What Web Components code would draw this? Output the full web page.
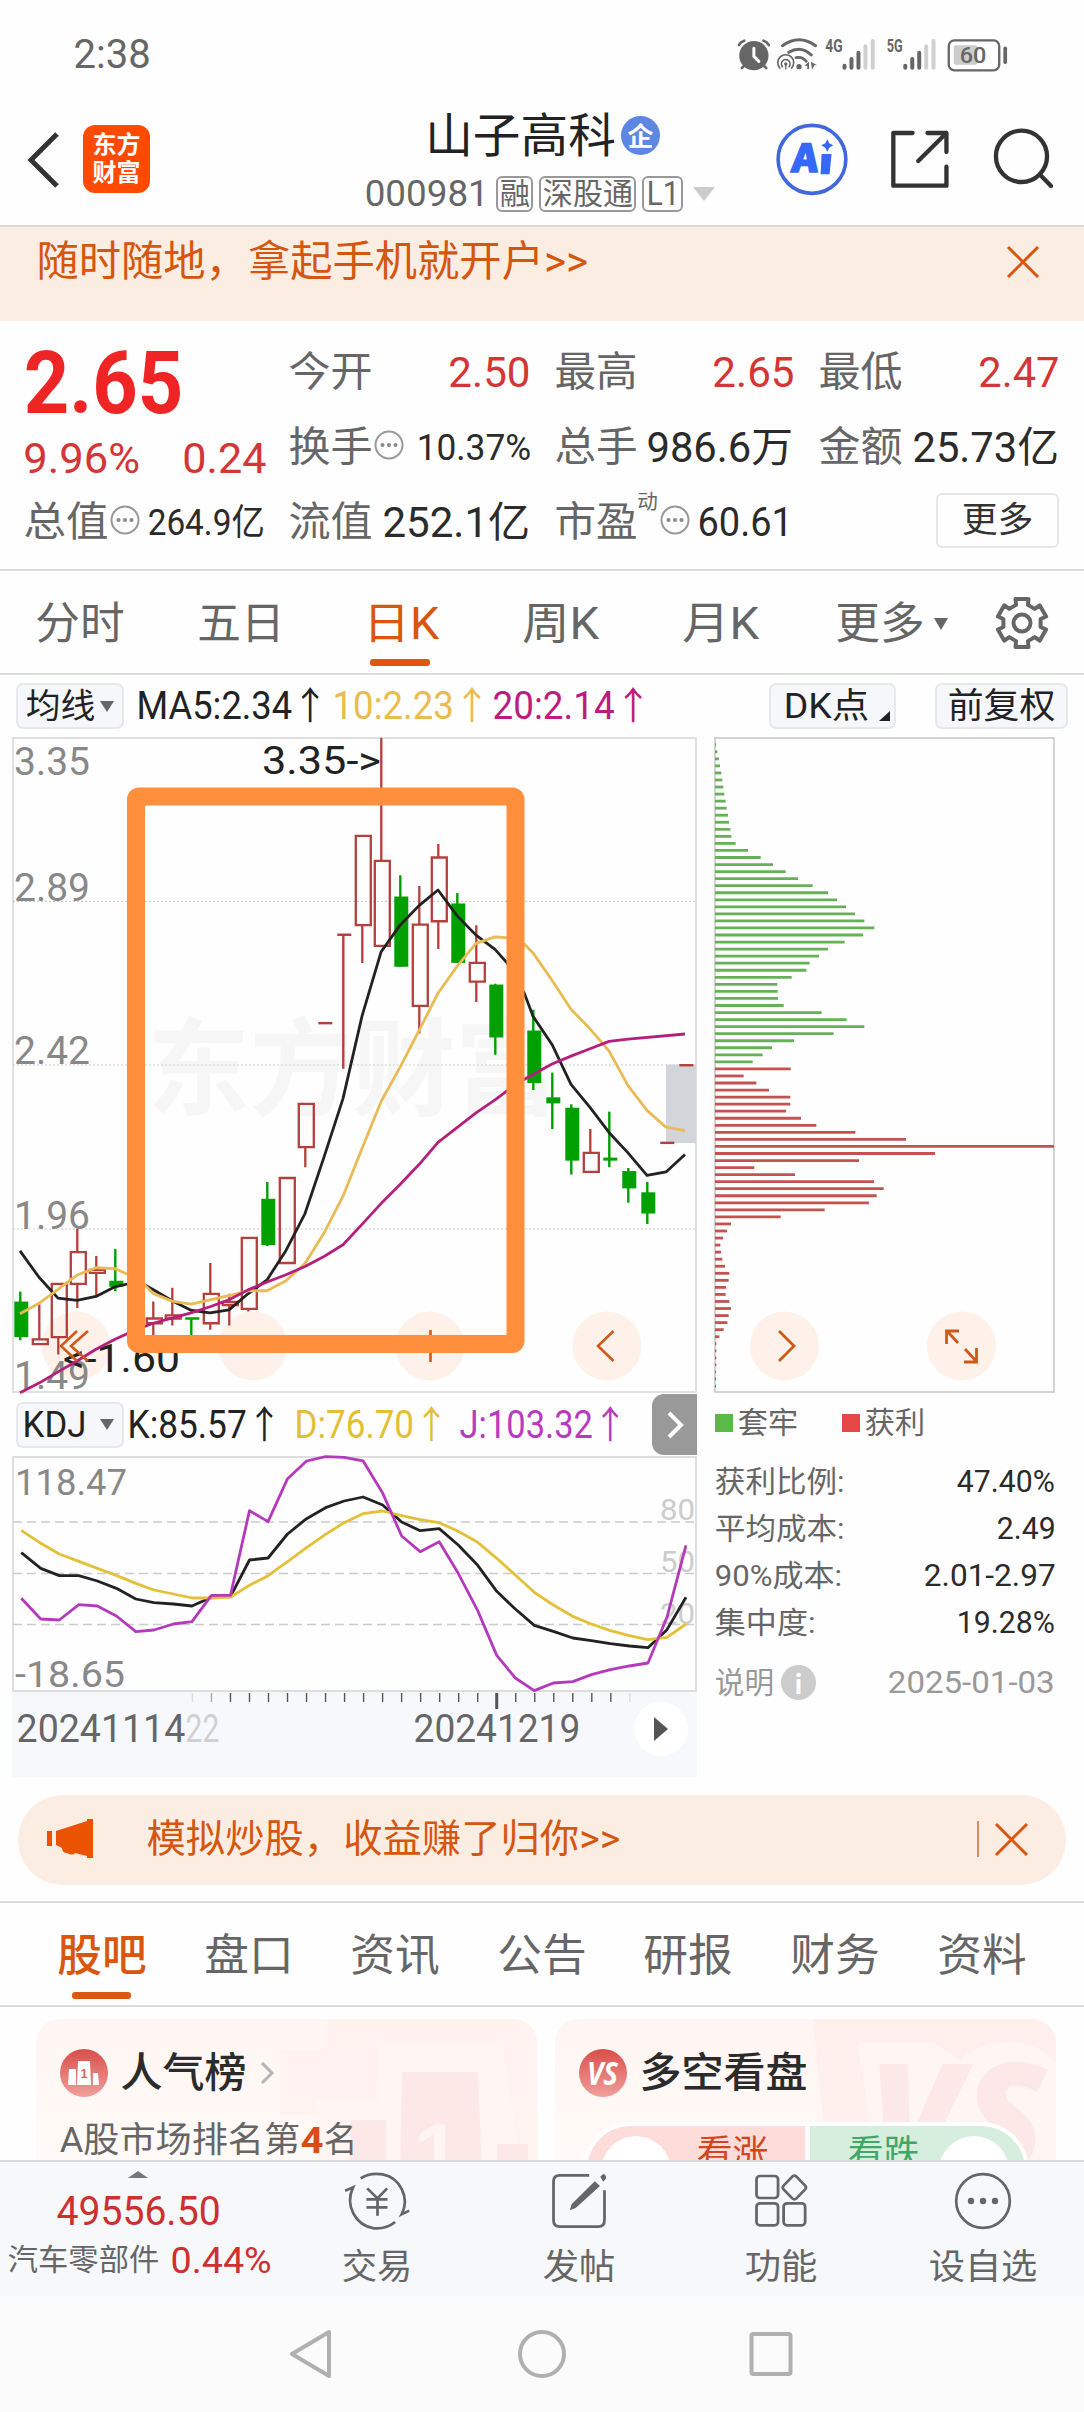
<!DOCTYPE html>
<html lang="zh-CN">
<head>
<meta charset="utf-8">
<title>山子高科 000981</title>
<style>
html,body{margin:0;padding:0;background:#fefefe}
body{width:1084px;height:2412px;overflow:hidden;font-family:Roboto,"Noto Sans CJK SC",sans-serif;color:#666}
</style>
</head>
<body>
<stock-page></stock-page>
<script>
const BASE = `*{box-sizing:border-box}svg{display:block;overflow:visible}`;
function define(name, css, html) {
  customElements.define(name, class extends HTMLElement {
    constructor() {
      super();
      this.attachShadow({mode: 'open'}).innerHTML =
        `<style>${BASE}:host{display:block}${css}</style>` + (typeof html === 'function' ? html(this) : html);
    }
  });
}

/* One line of text stretched to a given ink width. w: width, s: size, g: gap before, wt: weight, c: colour */
customElements.define('fit-text', class extends HTMLElement {
  constructor() {
    super();
    this.attachShadow({mode: 'open'}).innerHTML =
      `<style>:host{display:block;flex:none;white-space:nowrap}span{display:inline-block;transform-origin:0 50%;line-height:inherit}</style><span><slot></slot></span>`;
  }
  connectedCallback() {
    const a = (n, d) => this.hasAttribute(n) ? this.getAttribute(n) : d;
    const w = +a('w', 0), s = +a('s', 40);
    this.style.cssText = `width:${w}px;height:${s}px;line-height:${s}px;font-size:${s}px;margin-left:${a('g', 0)}px;font-weight:${a('wt', 400)};` + (a('c') ? `color:${a('c')};` : '');
    const sp = this.shadowRoot.firstElementChild.nextElementSibling;
    const pad = s * 0.038, nat = sp.offsetWidth;
    if (nat) sp.style.transform = `translateX(${-pad}px) scaleX(${(w + 2 * pad) / nat})`;
  }
});

/* Horizontal strip with centred items. h: height */
customElements.define('h-row', class extends HTMLElement {
  constructor() {
    super();
    this.attachShadow({mode: 'open'}).innerHTML = `<style>:host{display:flex;align-items:center;flex:none}</style><slot></slot>`;
  }
  connectedCallback() { this.style.height = this.getAttribute('h') + 'px'; }
});

define('status-bar', `:host{height:110px;display:flex;align-items:center}svg{margin-left:571px}`,
`<fit-text g="75" w="74" s="40">2:38</fit-text>
<svg width="340" height="70" viewBox="0 0 1024 210" preserveAspectRatio="none" fill="none" stroke="#666" stroke-linecap="round">
<g transform="translate(0,1)">
<circle cx="102" cy="106" r="44" fill="#666" stroke="none"/><path d="M102 84v24l15 15" stroke="#fff" stroke-width="9"/>
<path d="M57 74q6-10 16-13M147 74q-6-10-16-13M66 143l8-8M139 143l-8-8" stroke-width="8"/>
<path d="M188 76q50-36 100 0" stroke-width="9"/><path d="M207 96q36-22 68 8" stroke-width="9"/><path d="M229 112q18-4 31 11" stroke-width="8"/>
<path d="M180 143a24 24 0 1 1 36 0" stroke-width="5"/><path d="M188 139a13 13 0 1 1 20 0" stroke-width="5"/><circle cx="198" cy="131" r="5" fill="#666" stroke="none"/><path d="M198 132v14" stroke-width="4"/>
<circle cx="238" cy="139" r="8" fill="#666" stroke="none"/><path d="M254 136l14-12v22h-5v-10zM274 124l18 11h-8l-7 13z" fill="#666" stroke="none"/>
<g stroke-width="12"><path d="M375 136v6M396 116v26M417 97v45"/><path d="M438 78v64M460 62v80" stroke="#d0d0d0"/>
<path d="M558 136v6M579 116v26M600 97v45"/><path d="M621 78v64M643 62v80" stroke="#d0d0d0"/></g>
<rect x="689" y="60" width="152" height="90" rx="17" stroke-width="7"/><rect x="704" y="75" width="71" height="58" rx="6" fill="#ccc" stroke="none"/><path d="M859 84v42" stroke-width="11"/>
<g fill="#666" stroke="none" font-weight="700" font-family="Roboto"><text x="317" y="96" font-size="54" textLength="52" lengthAdjust="spacingAndGlyphs">4G</text><text x="502" y="96" font-size="54" textLength="48" lengthAdjust="spacingAndGlyphs">5G</text>
<text x="722" y="129" font-size="68" font-weight="500" textLength="80" lengthAdjust="spacingAndGlyphs">60</text></g></g></svg>`);

define('page-header', `:host{height:117px;display:flex;border-bottom:2px solid #d9d9d9;position:relative}
.logo{margin:15px 0 0 26px;width:67px;height:68px;border-radius:12px;background:#ff4a00;color:#fff;font:700 24px/28px "Noto Sans CJK SC",sans-serif;text-align:center;padding-top:4px;flex:none}
.mid{margin-left:216px;width:358px}.badge{width:39px;height:39px;border-radius:50%;background:#5d87e2;margin-left:7px;color:#fff;font:700 26px/37px "Noto Sans CJK SC",sans-serif;text-align:center}
.tag{height:36px;border:2px solid #999;border-radius:6px;margin-left:6px;display:flex;align-items:center;justify-content:center;flex:none}
.tri{border:11px solid transparent;border-top:14px solid #ccc;border-bottom:0;margin-left:10px}`,
`<svg width="31" height="60" style="margin:20px 0 0 26px;flex:none" fill="none" stroke="#333" stroke-width="5"><path d="M31 4L5 30L31 56"/></svg>
<div class="logo">东方<br>财富</div>
<div class="mid">
<h-row h="50"><fit-text g="61" w="187" s="47" c="#222">山子高科</fit-text><div class="badge">企</div></h-row>
<h-row h="67"><fit-text w="121" s="36">000981</fit-text><div class="tag" style="width:37px;margin-left:9px"><fit-text w="28" s="30">融</fit-text></div><div class="tag" style="width:97px"><fit-text w="88" s="30">深股通</fit-text></div><div class="tag" style="width:41px"><fit-text w="30" s="33">L1</fit-text></div><div class="tri"></div></h-row></div>
<svg width="340" height="90" viewBox="0 270 1024 270" preserveAspectRatio="none" style="flex:none;margin:0 0 0 -4px" fill="none" stroke="#333" stroke-width="13" stroke-linecap="round" stroke-linejoin="round">
<circle cx="277" cy="418" r="102" stroke="#4068dc" stroke-width="11"/>
<g font-family="Noto Sans CJK SC" font-weight="900" fill="#3668fa" stroke="#3668fa" stroke-width="5"><text transform="translate(214 455) skewX(-5)" font-size="114" textLength="78" lengthAdjust="spacingAndGlyphs">A</text></g>
<path d="M306 402h30l-6 61h-27z" fill="#3668fa" stroke="none"/><path d="M323 358l6 12 12 6-12 7-6 12-6-12-12-7 12-6z" fill="#3668fa" stroke="none"/>
<path d="M580 339H522V497H682V440M625 339H682V396M682 339L597 423"/>
<circle cx="908" cy="409" r="77"/><path d="M964 464L997 498"/></svg>`);

define('ad-banner', `:host{height:94px;background:#fcede3;display:flex;color:#d4560f}h-row{margin-top:-12px}`,
`<h-row h="94"><fit-text g="38" w="549" s="41.6">随时随地，拿起手机就开户&gt;&gt;</fit-text>
<svg width="34" height="34" style="margin-left:419px" stroke="#d9560e" stroke-width="3"><path d="M2 2L32 32M32 2L2 32"/></svg></h-row>`);

define('dots-icon', `:host{flex:none;width:30px}`,
`<svg width="30" height="30" fill="none" stroke="#999" stroke-width="2"><circle cx="15" cy="15" r="13.5"/><g fill="#888" stroke="none"><circle cx="8.5" cy="15" r="2"/><circle cx="15" cy="15" r="2"/><circle cx="21.5" cy="15" r="2"/></g></svg>`);

define('quote-panel', `:host{height:250px;padding-top:14px;border-bottom:2px solid #dcdcdc}
.top{display:flex}.left{width:290px}.right{width:794px}
.btn{width:123px;height:55px;border:2px solid #e6e6e6;border-radius:6px;display:flex;align-items:center;margin-left:147px;margin-top:-4px}
dots-icon{margin:-6px 0 0 3px}.up{align-self:flex-start;margin-top:7px}`,
`<div class="top"><div class="left">
<h-row h="97"><fit-text g="27" w="153" s="87" wt="700" c="#ee2524">2.65</fit-text></h-row>
<h-row h="53"><fit-text g="25" w="113" s="43" c="#d43535">9.96%</fit-text><fit-text g="46" w="81" s="43" c="#d43535">0.24</fit-text></h-row></div>
<div class="right">
<h-row h="75"><fit-text w="81" s="41">今开</fit-text><fit-text g="79" w="79" s="43" c="#d43535">2.50</fit-text><fit-text g="27" w="80" s="41">最高</fit-text><fit-text g="78" w="79" s="43" c="#d43535">2.65</fit-text><fit-text g="27" w="81" s="41">最低</fit-text><fit-text g="79" w="78" s="43" c="#d43535">2.47</fit-text></h-row>
<h-row h="75"><fit-text w="81" s="41">换手</fit-text><dots-icon></dots-icon><fit-text g="14" w="112" s="36" c="#2b2b2b">10.37%</fit-text><fit-text g="26" w="80" s="41">总手</fit-text><fit-text g="12" w="144" s="42" c="#2b2b2b">986.6万</fit-text><fit-text g="28" w="81" s="41">金额</fit-text><fit-text g="13" w="144" s="42" c="#2b2b2b">25.73亿</fit-text></h-row></div></div>
<h-row h="75"><fit-text g="25" w="82" s="41">总值</fit-text><dots-icon></dots-icon><fit-text g="9" w="114" s="36" c="#2b2b2b">264.9亿</fit-text><fit-text g="27" w="81" s="41">流值</fit-text><fit-text g="13" w="145" s="42" c="#2b2b2b">252.1亿</fit-text><fit-text g="27" w="80" s="41">市盈</fit-text><fit-text class="up" g="2" w="19" s="20">动</fit-text><dots-icon></dots-icon><fit-text g="9" w="92" s="40" c="#2b2b2b">60.61</fit-text><div class="btn" style="margin-left:145px"><fit-text g="25" w="69" s="35" c="#333">更多</fit-text></div></h-row>`);

const gear = (() => {
  let p = [];
  for (let i = 0; i < 6; i++) {
    const a = i * 60 - 90;
    [[-18, 19], [-15, 25], [15, 25], [18, 19]].forEach(([d, r]) => {
      const t = (a + d) * Math.PI / 180;
      p.push((27 + r * Math.cos(t)).toFixed(1) + ',' + (27 + r * Math.sin(t)).toFixed(1));
    });
  }
  return `<svg width="54" height="54" fill="none" stroke="#666" stroke-width="4" stroke-linejoin="round"><polygon points="${p.join(' ')}"/><circle cx="27" cy="27" r="8.5"/></svg>`;
})();

define('period-tabs', `:host{height:104px;border-bottom:2px solid #dcdcdc;position:relative}
.bar{position:absolute;left:370px;top:88px;width:60px;height:7px;border-radius:3px;background:#e0560f}
.tri{border:7px solid transparent;border-top:12px solid #666;border-bottom:0;margin-left:11px}`,
`<h-row h="105"><fit-text g="37" w="86" s="44">分时</fit-text><fit-text g="76" w="84" s="44">五日</fit-text><fit-text g="82" w="73" s="44" c="#d9560e">日K</fit-text><fit-text g="86" w="74" s="44">周K</fit-text><fit-text g="86" w="74" s="44">月K</fit-text><fit-text g="79" w="86" s="44">更多</fit-text><div class="tri"></div><div style="margin-left:47px;margin-top:-2px">${gear}</div></h-row><div class="bar"></div>`);

define('chip-box', `:host{height:46px;display:flex;align-items:center;flex:none;background:#f6f7fa;border:2px solid #e6e8ec;border-radius:7px;color:#222}`, `<slot></slot>`);
define('down-tri', `:host{border:7px solid transparent;border-top:11px solid #666;border-bottom:0}`, ``);

define('ma-bar', `:host{height:62px}.corner{border-left:11px solid transparent;border-bottom:10px solid #222;margin:19px 0 0 11px}`,
`<h-row h="62"><chip-box style="width:108px;margin-left:16px"><fit-text g="9" w="67" s="34">均线</fit-text><down-tri style="margin-left:6px"></down-tri></chip-box>
<fit-text g="14" w="189" s="38" c="#222">MA5:2.34↑</fit-text><fit-text g="7" w="155" s="38" c="#eabb4d">10:2.23↑</fit-text><fit-text g="5" w="156" s="38" c="#bd1b80">20:2.14↑</fit-text>
<chip-box style="width:127px;margin-left:119px"><fit-text g="14" w="83" s="35">DK点</fit-text><div class="corner"></div></chip-box>
<chip-box style="width:133px;margin-left:39px"><fit-text g="12" w="105" s="35">前复权</fit-text></chip-box></h-row>`);

const T = (x, y, w, s, c, t, extra = '') => `<text x="${x}" y="${y}" font-size="${s}" fill="${c}" textLength="${w}" lengthAdjust="spacingAndGlyphs" ${extra}>${t}</text>`;
const SX = 1 / 3, SY = 680 / 1568;

/* Price chart: kind, x, body top, body bottom, high, low */
const candles = [['G',60,1318,1400,1295,1407],['R',117,1405,1416,1325,1416],['R',174,1277,1400,1277,1440],['R',231,1204,1277,1150,1333],['R',288,1245,1252,1213,1305],['G',345,1270,1284,1197,1294],
['R',459,1357,1368,1318,1400],['R',516,1350,1357,1286,1373],['T',573,1357,1357,1357,1400],['R',630,1300,1368,1229,1383],['R',687,1319,1326,1300,1373],['R',744,1171,1335,1171,1341],['G',801,1081,1188,1042,1190],
['R',858,1033,1229,1033,1229],['R',915,862,962,862,1008],['D',972,676,676,676,676],['D',1029,472,472,472,781],['R',1086,244,450,244,537],['R',1143,302,498,18,498],['G',1200,384,546,335,546],['R',1257,449,636,360,700],
['R',1314,294,441,263,505],['G',1371,400,537,376,537],['R',1428,537,580,450,627],['G',1485,587,709,585,749],['G',1599,693,814,645,830],['G',1656,847,861,790,920],['G',1713,871,993,863,1025],
['R',1770,975,1019,920,1019],['G',1827,986,993,880,1008],['G',1884,1017,1057,1010,1090],['G',1941,1066,1115,1042,1139],['D',1998,952,952,952,952],['D',2055,773,773,773,773]];
function candle([k, x, t, b, h, l]) {
  const X = x * SX + .3, y = v => 730 + v * SY, c = k === 'G' || k === 'T' ? '#00a000' : '#b3403c';
  if (k === 'G') return `<path d="M${X} ${y(h)}V${y(l)}" stroke="${c}" stroke-width="2.4"/><rect x="${X - 6}" y="${y(t)}" width="14" height="${y(b) - y(t)}" fill="${c}"/>`;
  if (k === 'D' || k === 'T') return `<path d="M${X - 6} ${y(t)}h14M${X} ${y(h)}V${y(l)}" stroke="${c}" stroke-width="2.4"/>`;
  return `<path d="M${X} ${y(h)}V${y(t)}M${X} ${y(b)}V${y(l)}M${X - 6.5} ${y(t)}h15V${y(b)}h-15z" stroke="${c}" stroke-width="2.3" fill="none"/>`;
}
const poly = (p, c, w = 2.8) => `<polyline points="${p}" stroke="${c}" stroke-width="${w}" fill="none" vector-effect="non-scaling-stroke" stroke-linejoin="round"/>`;
const ma5 = '60,1201 117,1262 174,1310 231,1315 288,1306 345,1284 402,1274 435,1280 459,1290 516,1316 573,1338 630,1344 687,1337 744,1300 801,1268 858,1200 915,1115 972,985 1029,850 1086,660 1143,512 1200,450 1257,405 1314,369 1371,428 1428,473 1485,506 1521,537 1572,605 1599,660 1656,725 1713,817 1770,870 1827,928 1884,975 1941,1027 1998,1019 2055,979';
const ma10 = '60,1346 117,1322 174,1290 231,1257 288,1240 345,1242 402,1262 435,1280 459,1299 516,1317 573,1324 630,1314 687,1304 744,1293 801,1293 858,1270 915,1230 972,1160 1029,1075 1086,965 1143,857 1200,778 1257,693 1314,607 1371,545 1428,492 1485,477 1521,479 1572,493 1599,514 1656,577 1713,644 1770,689 1827,740 1884,820 1941,877 1998,916 2055,924';
const ma20 = '60,1528 117,1506 174,1480 231,1455 288,1428 345,1405 402,1385 459,1368 516,1356 573,1344 630,1330 687,1314 744,1291 801,1273 858,1256 915,1237 972,1214 1029,1187 1086,1140 1143,1092 1200,1048 1257,1002 1314,951 1371,917 1428,883 1485,853 1521,832 1572,806 1656,770 1713,752 1770,735 1827,718 1884,713 2055,701';

define('price-chart', `:host{height:656px}`,
`<svg width="685" height="656" viewBox="12 737 685 656" font-family="Roboto,'Noto Sans CJK SC'">
<rect x="13" y="738" width="683" height="654" fill="#fefefe" stroke="#e0e0e0" stroke-width="2"/>
${T(147, 1107, 411, 106, '#f6f6f6', '东方财富', 'font-weight="700"')}
<path d="M13 901.3H696M13 1065H696M13 1229H696" stroke="#ccc" stroke-width="1.2" stroke-dasharray="2 2"/>
<g fill="#fef1e9"><circle cx="76" cy="1346" r="34.5"/><circle cx="253" cy="1346" r="34.5"/><circle cx="430" cy="1346" r="34.5"/><circle cx="607" cy="1346" r="34.5"/></g>
<rect x="666" y="1064.5" width="30" height="78.500" fill="#d2d6db"/>
${T(14, 775, 76, 39, '#888', '3.35')}${T(14, 901, 76, 39, '#888', '2.89')}${T(14, 1064, 76, 39, '#888', '2.42')}${T(14, 1228.5, 76, 39, '#888', '1.96')}${T(14, 1389, 76, 39, '#888', '1.49')}
${T(262, 773.5, 119, 39, '#222', '3.35-&gt;')}${T(63, 1372, 117, 39, '#222', '&lt;-1.60')}
${candles.map(candle).join('')}
<g transform="translate(0,730) scale(${SX},${SY})">${poly(ma5, '#222')}${poly(ma10, '#eabb55')}${poly(ma20, '#b51f7c')}</g>
<g fill="none" stroke="#d0591a" stroke-width="2.6"><path d="M77 1331L61 1346L77 1361M88 1331L71 1346L88 1361M430.500 1330V1362M613.500 1331L598 1346L613.500 1361"/></g>
<rect x="136" y="796.500" width="379.500" height="547.500" rx="3" fill="none" stroke="#ff8f3c" stroke-width="18" stroke-linejoin="round"/>
</svg>`);

define('kdj-bar', `:host{height:63px}.next{width:45px;height:61px;background:#999;border-radius:12px 0 0 12px;margin-left:26px;display:flex;align-items:center;justify-content:center;flex:none}`,
`<h-row h="63"><chip-box style="width:108px;margin-left:4px"><fit-text g="6" w="61" s="37">KDJ</fit-text><down-tri style="margin-left:15px"></down-tri></chip-box>
<fit-text g="5" w="152" s="38" c="#222">K:85.57↑</fit-text><fit-text g="15" w="152" s="38" c="#e3bf35">D:76.70↑</fit-text><fit-text g="13" w="165" s="38" c="#b93ac0">J:103.32↑</fit-text>
<div class="next"><svg width="20" height="30" fill="none" stroke="#fff" stroke-width="4"><path d="M4 3L16 15L4 27"/></svg></div></h-row>`);

define('kdj-chart', `:host{height:236px}`,
`<svg width="685" height="236" viewBox="12 1456 685 236" font-family="Roboto">
<rect x="13" y="1457" width="683" height="234" fill="#fefefe" stroke="#dedede" stroke-width="2"/>
<path d="M13 1522H696M13 1573.500H696M13 1624.500H696" stroke="#ccc" stroke-width="1.5" stroke-dasharray="9 5"/>
${T(15, 1495, 112, 37, '#888', '118.47')}${T(15, 1687, 110, 37, '#888', '-18.65')}
${T(660, 1520, 35, 29, '#ccc', '80')}${T(660, 1572, 35, 29, '#ccc', '50')}${T(660, 1624, 35, 29, '#ccc', '20')}
<g transform="translate(0,1390) scale(.4528,.33333)">
${poly('47,488 90,535 131,557 174,557 215,573 257,595 300,627 340,638 383,642 424,648 467,622 509,620 551,510 592,504 635,432 677,386 719,353 760,333 802,321 845,345 887,396 928,422 970,416 1012,465 1055,526 1097,604 1138,657 1180,706 1222,724 1265,744 1306,752 1348,761 1390,768 1431,773 1473,719 1515,622', '#222')}
${poly('47,421 90,460 131,492 174,514 215,535 257,556 300,580 340,600 383,612 424,624 467,624 509,621 551,586 592,557 635,515 677,473 719,433 760,398 802,371 845,363 887,377 928,389 970,398 1012,424 1055,457 1097,505 1138,555 1180,607 1222,645 1265,679 1306,702 1348,722 1390,737 1431,749 1473,742 1515,702', '#e3c038')}
${poly('47,625 90,687 131,690 174,644 215,648 257,678 300,725 340,720 383,702 424,695 467,616 509,616 551,362 592,395 635,266 677,213 719,200 760,202 802,213 845,309 887,438 928,485 970,455 1012,550 1055,662 1097,796 1138,864 1180,902 1222,879 1265,875 1306,854 1348,839 1390,828 1431,819 1473,682 1515,466', '#b53abb')}
</g></svg>`);

let ticks = '';
for (let i = 0; i < 24; i++) {
  const x = (425 + i * 42) / 2.2085;
  ticks += `<path d="M${x} 1V${i === 16 ? 17 : 10}" stroke="${i === 0 || i === 23 ? '#ddd' : i === 1 ? '#aaa' : '#555'}" stroke-width="${i === 16 ? 3 : 1.4}"/>`;
}
define('date-strip', `:host{height:85px;background:#f7f8fb}
.play{width:54px;height:54px;border-radius:50%;background:#fff;margin-left:55px;display:flex;align-items:center;justify-content:center}.play i{border:12px solid transparent;border-left:14px solid #555;border-right:0}`,
`<svg width="685" height="12" viewBox="12 0 685 12">${ticks}</svg>
<h-row h="50"><fit-text g="6" w="166" s="38">20241114</fit-text><fit-text g="3" w="31" s="38" c="#d0d0d0">22</fit-text><fit-text g="197" w="164" s="38">20241219</fit-text><div class="play"><i></i></div></h-row>`);

const gEnds = [78,82,87,90,94,97,100,103,107,110,114,117,121,124,137,174,212,249,287,324,368,414,441,468,495,523,553,519,464,414,387,359,349,305,262,263,264,281,395,470,523,431,312,246,218,188];
const rEnds = [302,161,199,237,301,301,288,333,379,496,648,1092,735,507,193,315,552,581,560,537,404,272,123,111,99,91,93,97,105,118,116,108,107,118,123,116,112,101,88,79,79,79,79,78,78,78];
const bars = gEnds.concat(rEnds).map((e, i) => `<path d="M715 ${(730 + (34 + i * 16.25) * SY).toFixed(2)}H${690 + e / 3}" stroke="${i < 46 ? '#66b058' : '#c4524f'}"/>`).join('');
define('cost-chart', `:host{height:656px}`,
`<svg width="341" height="656" viewBox="714 737 341 656"><rect x="715" y="738" width="339" height="654" fill="#fefefe" stroke="#c8c8c8" stroke-width="1.600"/>
<g stroke-width="2.8">${bars}</g><circle cx="784.500" cy="1346" r="34.500" fill="#fef1e9"/><circle cx="961.500" cy="1346" r="34.500" fill="#fef1e9"/>
<g fill="none" stroke="#d0591a" stroke-width="2.800"><path d="M779 1331L794 1346L779 1361M959 1331H946.500V1344M947 1331L958 1343M964 1362H976.500V1348M976 1361L965 1349"/></g></svg>`);

define('cost-info', `:host{color:#666}i{width:18px;height:18px;flex:none}.rows h-row{justify-content:space-between}.last{margin-top:13px}
.info{width:35px;height:35px;border-radius:50%;background:#ccc;color:#fff;font:700 26px/35px "Noto Sans CJK SC",sans-serif;text-align:center;margin-left:8px}`,
`<h-row h="60"><i style="background:#5bb947;margin-left:1px"></i><fit-text g="6" w="58" s="30">套牢</fit-text><i style="background:#e64848;margin-left:45px"></i><fit-text g="6" w="58" s="30">获利</fit-text></h-row>
<div class="rows" style="padding:5px 1px 0 2px">
<h-row h="47"><fit-text w="127" s="30">获利比例:</fit-text><fit-text w="96" s="31" c="#2b2b2b">47.40%</fit-text></h-row>
<h-row h="47"><fit-text w="127" s="30">平均成本:</fit-text><fit-text w="56" s="31" c="#2b2b2b">2.49</fit-text></h-row>
<h-row h="47"><fit-text w="125" s="30">90%成本:</fit-text><fit-text w="129" s="31" c="#2b2b2b">2.01-2.97</fit-text></h-row>
<h-row h="47"><fit-text w="98" s="30">集中度:</fit-text><fit-text w="96" s="31" c="#2b2b2b">19.28%</fit-text></h-row></div>
<h-row h="47" class="last"><fit-text g="2" w="57" s="30" c="#999">说明</fit-text><div class="info">i</div><fit-text g="73" w="165" s="31" c="#999">2025-01-03</fit-text></h-row>`);

define('chart-area', `:host{display:flex;height:1041px;padding-left:12px}.l{width:685px}.r{width:341px;margin-left:17px}`,
`<div class="l"><price-chart></price-chart><kdj-bar></kdj-bar><kdj-chart></kdj-chart><date-strip></date-strip></div>
<div class="r"><cost-chart></cost-chart><cost-info></cost-info></div>`);

define('promo-pill', `:host{height:125px;padding:17px 18px 0;border-bottom:2px solid #dcdcdc}.pill{height:90px;border-radius:45px;background:#fcede3;color:#d4560f;padding-bottom:4px}`,
`<div class="pill"><h-row h="88"><svg width="47" height="40" style="margin-left:29px" fill="#ec5300"><path d="M0 12h5v15H0zM9 12L40 2V0h6v39h-6v-2l-12-3q-2 3-8 0-5 0-5-5l-6-3z"/></svg>
<fit-text g="54" w="471" s="39">模拟炒股，收益赚了归你&gt;&gt;</fit-text>
<svg width="52" height="36" style="margin-left:358px" stroke="#d9560e" stroke-width="3"><path d="M1 0V36" stroke-width="1.300"/><path d="M19 3L50 34M50 3L19 34"/></svg></h-row></div>`);

define('info-tabs', `:host{height:104px;border-bottom:2px solid #dcdcdc;position:relative}.bar{position:absolute;left:72px;top:89px;width:59px;height:7px;border-radius:3px;background:#e0560f}`,
`<h-row h="106"><fit-text g="59" w="86" s="44" c="#d9560e" wt="500">股吧</fit-text>${['盘口', '资讯', '公告', '研报', '财务', '资料'].map(t => `<fit-text g="60.6" w="86" s="44">${t}</fit-text>`).join('')}</h-row><div class="bar"></div>`);

define('topic-card', `:host{width:501px;height:240px;border-radius:24px;background:linear-gradient(#fff5f3,#fffaf7 50%,#fff8f6);overflow:hidden;position:relative;flex:none}
.bg{position:absolute;left:0;top:0}.in{position:relative}`, `<div class="bg"><slot name="bg"></slot></div><div class="in"><slot></slot></div>`);

const defs = id => `<defs><linearGradient id="${id}" x1="0" y1="0" x2="0" y2="1"><stop offset="0" stop-color="#d94e4a"/><stop offset="1" stop-color="#f0a09c"/></linearGradient></defs>`;
define('topic-cards', `:host{display:flex;height:153px;padding:12px 0 0 36px;gap:18px;overflow:hidden}
.sw{display:flex;width:446px;height:96px;margin:3px 0 0 28px;border:4px solid #fff;border-radius:50px;gap:5px;background:#fff;overflow:hidden}.sw fit-text{margin-top:10px}
.a,.b{height:90px;display:flex;flex:none}.a{width:218px;background:#fddcd9}.b{width:215px;background:#d6eedd}
.k{width:70px;height:70px;border-radius:50%;background:#fff;margin-top:10px;flex:none}`,
`<topic-card><svg slot="bg" width="501" height="160" viewBox="36 2019 501 160"><path d="M327 2019H537V2160H316V2115H280V2050H327z" fill="#fff0ee" opacity=".75"/><path d="M379 2043H502L520 2160H316V2101H378z" fill="#fff6f4"/><path d="M402 2072H478L482 2175H400zM351 2120H386V2175H349zM497 2144H528V2175H497z" fill="#fce8e6"/>
<text x="414" y="2182" font-family="Liberation Sans" font-weight="700" font-size="84" fill="#fff4f2">1</text></svg>
<h-row h="100" style="padding-top:8px"><svg width="48" height="48" style="margin-left:24px">${defs('ga')}<circle cx="24" cy="24" r="24" fill="url(#ga)"/><path d="M9 20h7v16H8zM18 12h12l1 24H17zM33 24h5l1 12h-6z" fill="#fff"/><text x="20.500" y="29" font-size="13" font-weight="700" fill="#df6460" font-family="Liberation Sans">1</text></svg>
<fit-text g="14" w="123" s="41" wt="500" c="#2b2b2b">人气榜</fit-text><svg width="14" height="24" style="margin-left:15px" fill="none" stroke="#b5b5b5" stroke-width="3"><path d="M2 2L12 12L2 22"/></svg></h-row>
<h-row h="43"><fit-text g="25" w="238" s="35">A股市场排名第</fit-text><fit-text g="3" w="20" s="37" wt="700" c="#dc4a18">4</fit-text><fit-text g="3" w="31" s="35">名</fit-text></h-row></topic-card>
<topic-card><svg slot="bg" width="501" height="160" viewBox="555 2019 501 160"><path d="M813 2019H1056V2160H827z" fill="#feecea" opacity=".7"/><path d="M858 2042H930L960 2060Q985 2038 1020 2043Q1056 2050 1060 2080L1056 2160H875z" fill="#fff6f4"/>
<text x="868" y="2173" font-family="Open Sans" font-weight="800" font-style="italic" font-size="152" fill="#fce8e6" textLength="178" lengthAdjust="spacingAndGlyphs">VS</text></svg>
<h-row h="100" style="padding-top:8px"><svg width="48" height="48" style="margin-left:24px">${defs('gb')}<circle cx="24" cy="24" r="24" fill="url(#gb)"/><text x="8" y="36" font-size="33" font-weight="700" font-style="italic" fill="#fff" font-family="Open Sans" textLength="31" lengthAdjust="spacingAndGlyphs">VS</text></svg>
<fit-text g="14" w="165" s="41" wt="500" c="#2b2b2b">多空看盘</fit-text></h-row>
<div class="sw"><div class="a"><div class="k" style="margin-left:14px"></div><fit-text g="27" w="69" s="35" c="#d1461f">看涨</fit-text></div><div class="b"><fit-text g="39" w="69" s="35" c="#40a765">看跌</fit-text><div class="k" style="margin-left:21px"></div></div></div></topic-card>`);

define('bottom-item', `:host{display:flex;flex-direction:column;align-items:center;flex:none;width:202px;padding-top:7px}::slotted(svg){flex:none}::slotted(fit-text){margin-top:15px}`, `<slot></slot>`);
define('bottom-bar', `:host{height:136px;border-top:2px solid #d9dadc;background:#f7f8fa;display:flex}
.idx{width:276px}.tri{border:10.5px solid transparent;border-bottom:7px solid #777;border-top:0;width:0;margin:9px 0 0 128px}`,
`<div class="idx"><div class="tri"></div><h-row h="66"><fit-text g="58" w="161" s="41" c="#cc3030">49556.50</fit-text></h-row><h-row h="32"><fit-text g="9" w="149" s="30">汽车零部件</fit-text><fit-text g="14" w="98" s="37" c="#cc3030">0.44%</fit-text></h-row></div>
<bottom-item><svg width="70" height="66" viewBox="992 504 203 198" preserveAspectRatio="none" fill="none" stroke="#666" stroke-width="8"><path d="M1046 532Q1072 514 1110 520C1160 530 1190 590 1165 640L1187 629M1146 663Q1120 685 1085 682C1030 674 1000 612 1024 559L1001 569M1065 562L1095 592L1123 562M1063 595H1124M1063 619H1124M1095 592V644"/></svg><fit-text w="68" s="35">交易</fit-text></bottom-item>
<bottom-item><svg width="60" height="66" viewBox="26 504 173 198" preserveAspectRatio="none" fill="none" stroke="#666" stroke-width="8"><path d="M142 523H57Q39 523 39 541V658Q39 677 57 677H168Q186 677 186 658V568"/><path d="M174 527l8-8q10 2 8 14l-8 9zM158 541l15 14L103 621 86 628 91 610z" fill="#666" stroke="none"/></svg><fit-text w="70" s="35">发帖</fit-text></bottom-item>
<bottom-item><svg width="58" height="66" viewBox="612 504 167 198" preserveAspectRatio="none" fill="none" stroke="#666" stroke-width="8"><rect x="625" y="525" width="62" height="66" rx="10"/><rect x="625" y="607" width="62" height="66" rx="10"/><rect x="703" y="607" width="62" height="66" rx="10"/><path d="M728 527q6-6 12 0l25 27q5 5 0 11l-25 27q-6 6-12 0l-25-27q-5-6 0-11z"/></svg><fit-text w="70" s="35">功能</fit-text></bottom-item>
<bottom-item><svg width="60" height="66" fill="none" stroke="#666" stroke-width="2.700"><circle cx="30" cy="32" r="26.800"/><g fill="#666" stroke="none"><circle cx="18" cy="32" r="3.200"/><circle cx="30" cy="32" r="3.200"/><circle cx="42" cy="32" r="3.200"/></g></svg><fit-text w="106" s="35">设自选</fit-text></bottom-item>`);

define('system-nav', `:host{height:116px;background:#fbfbfb;display:flex;align-items:center;padding-left:288px}`,
`<svg width="510" height="52" fill="none" stroke="#b0b0b0" stroke-width="4" stroke-linejoin="round"><path d="M41 4V48L4 26z"/><circle cx="254" cy="26" r="22"/><rect x="463.500" y="6" width="39" height="40" rx="2"/></svg>`);

define('stock-page', `:host{width:1084px;height:2412px;display:flex;flex-direction:column;overflow:hidden;background:#fefefe}:host>*{flex:none}`,
`<status-bar></status-bar><page-header></page-header><ad-banner></ad-banner><quote-panel></quote-panel><period-tabs></period-tabs><ma-bar></ma-bar><chart-area></chart-area><promo-pill></promo-pill><info-tabs></info-tabs><topic-cards></topic-cards><bottom-bar></bottom-bar><system-nav></system-nav>`);
</script>
</body>
</html>
